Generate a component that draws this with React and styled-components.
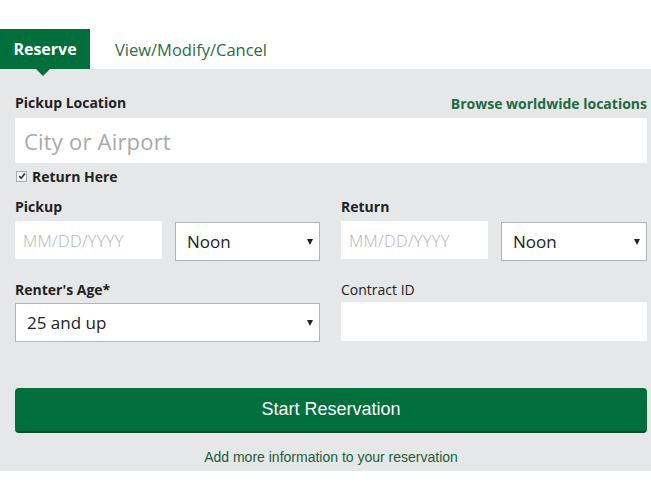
import { styled, createGlobalStyle } from 'styled-components';

const GlobalStyle = createGlobalStyle`
  body {
    margin: 0;
    background: #fff;
    font-family: "Open Sans", Lato, sans-serif;
  }
`;

function TimeSelect({ value, options }) {
  return (
    <SelectWrap>
      <Select defaultValue={value}>
        {options.map((o) => (
          <option key={o}>{o}</option>
        ))}
      </Select>
      <Caret />
    </SelectWrap>
  );
}

const times = ['Noon', '12:30 PM', '1:00 PM', '1:30 PM'];
const ages = ['25 and up', '24', '23', '22', '21'];

function App() {
  return (
    <Page>
      <GlobalStyle />
      <Tabs>
        <Tab $active>Reserve</Tab>
        <Tab>View/Modify/Cancel</Tab>
      </Tabs>
      <Panel>
        <LabelRow>
          <Label>Pickup Location</Label>
          <BrowseLink href="#">Browse worldwide locations</BrowseLink>
        </LabelRow>
        <LocationInput placeholder="City or Airport" />
        <CheckRow>
          <CheckBox>
            <svg width="8" height="8" viewBox="0 0 10 10">
              <path d="M1.5 5.2 L4 7.8 L8.6 1.8" fill="none" stroke="#333" strokeWidth="2" />
            </svg>
          </CheckBox>
          Return Here
        </CheckRow>
        <Columns $top={12}>
          <Column>
            <Label>Pickup</Label>
            <DateRow>
              <DateInput placeholder="MM/DD/YYYY" />
              <TimeSelect value="Noon" options={times} />
            </DateRow>
          </Column>
          <Column>
            <Label>Return</Label>
            <DateRow>
              <DateInput placeholder="MM/DD/YYYY" />
              <TimeSelect value="Noon" options={times} />
            </DateRow>
          </Column>
        </Columns>
        <Columns $top={19}>
          <Column>
            <Label>Renter's Age*</Label>
            <FieldGap>
              <TimeSelect value="25 and up" options={ages} />
            </FieldGap>
          </Column>
          <Column>
            <Label $light>Contract ID</Label>
            <FieldGap>
              <TextInput />
            </FieldGap>
          </Column>
        </Columns>
        <StartButton>Start Reservation</StartButton>
        <MoreInfo href="#">Add more information to your reservation</MoreInfo>
      </Panel>
    </Page>
  );
}

const Page = styled.div`
  width: 651px;
  padding-top: 29px;
`;

const Tabs = styled.div`
  display: flex;
  height: 40px;
`;

const Tab = styled.div`
  position: relative;
  display: flex;
  align-items: center;
  justify-content: center;
  width: ${(p) => (p.$active ? '90px' : 'auto')};
  padding: ${(p) => (p.$active ? '0' : '0 0 0 25px')};
  background: ${(p) => (p.$active ? '#006f3c' : 'transparent')};
  color: ${(p) => (p.$active ? '#fff' : '#2f6a4a')};
  font-weight: ${(p) => (p.$active ? 700 : 400)};
  font-size: ${(p) => (p.$active ? '16px' : '16.5px')};
  ${(p) =>
    p.$active &&
    `
    &::after {
      content: '';
      position: absolute;
      left: 36px;
      bottom: -7px;
      border-left: 7px solid transparent;
      border-right: 7px solid transparent;
      border-top: 7px solid #006f3c;
    }
  `}
`;

const Panel = styled.div`
  background: #e6e7e9;
  padding: 24px 4px 3px 15px;
`;

const LabelRow = styled.div`
  display: flex;
  justify-content: space-between;
  align-items: center;
`;

const Label = styled.div`
  height: 20px;
  line-height: 20px;
  font-size: 14px;
  font-weight: ${(p) => (p.$light ? 400 : 700)};
  color: #222;
`;

const BrowseLink = styled.a`
  font-size: 14px;
  font-weight: 700;
  color: #1f6a3f;
  text-decoration: none;
`;

const LocationInput = styled.input`
  display: block;
  box-sizing: border-box;
  width: 100%;
  height: 45px;
  margin-top: 5px;
  border: none;
  padding: 0 9px;
  font-family: "Open Sans", Lato, sans-serif;
  font-size: 22px;
  letter-spacing: 0.2px;
  background: #fff;
  &::placeholder {
    color: #a9a9a9;
  }
`;

const CheckRow = styled.div`
  display: flex;
  align-items: center;
  gap: 5px;
  height: 18px;
  margin-top: 4px;
  padding-left: 1px;
  font-size: 14px;
  font-weight: 700;
  color: #222;
`;

const CheckBox = styled.span`
  display: flex;
  align-items: center;
  justify-content: center;
  width: 9px;
  height: 9px;
  border: 1px solid #aaa;
  background: #f4f4f4;
`;

const Columns = styled.div`
  display: grid;
  grid-template-columns: 305px 306px;
  column-gap: 21px;
  margin-top: ${(p) => p.$top}px;
`;

const Column = styled.div`
  display: flex;
  flex-direction: column;
`;

const DateRow = styled.div`
  display: grid;
  grid-template-columns: 147px 1fr;
  column-gap: 13px;
  align-items: start;
  margin-top: 4px;
`;

const FieldGap = styled.div`
  margin-top: 2px;
`;

const DateInput = styled.input`
  box-sizing: border-box;
  width: 100%;
  height: 38px;
  border: none;
  padding: 0 8px;
  background: #fff;
  font-family: "Open Sans", Lato, sans-serif;
  font-size: 16.5px;
  font-weight: 300;
  letter-spacing: 0.3px;
  &::placeholder {
    color: #b3b3b3;
  }
`;

const TextInput = styled.input`
  display: block;
  box-sizing: border-box;
  width: 100%;
  height: 39px;
  border: none;
  background: #fff;
`;

const SelectWrap = styled.div`
  position: relative;
  margin-top: 1px;
`;

const Select = styled.select`
  appearance: none;
  display: block;
  box-sizing: border-box;
  width: 100%;
  height: 39px;
  padding: 0 11px;
  border: 1px solid #b4b4b4;
  border-radius: 0;
  background: #fff;
  font-family: "Open Sans", Lato, sans-serif;
  font-size: 17px;
  color: #222;
  outline: none;
`;

const Caret = styled.span`
  position: absolute;
  right: 7px;
  top: 17px;
  border-left: 3px solid transparent;
  border-right: 3px solid transparent;
  border-top: 6px solid #222;
  pointer-events: none;
`;

const StartButton = styled.button`
  display: block;
  width: 100%;
  height: 45px;
  margin-top: 46px;
  border: none;
  border-bottom: 2px solid #0c4a2b;
  border-radius: 4px;
  background: #006f3c;
  color: #fff;
  font-family: "Liberation Sans", Arial, sans-serif;
  font-size: 18px;
  cursor: pointer;
`;

const MoreInfo = styled.a`
  display: block;
  margin-top: 13px;
  height: 22px;
  line-height: 22px;
  text-align: center;
  font-family: "Liberation Sans", Arial, sans-serif;
  font-size: 14px;
  color: #1c5e35;
  text-decoration: none;
`;

export default App;
